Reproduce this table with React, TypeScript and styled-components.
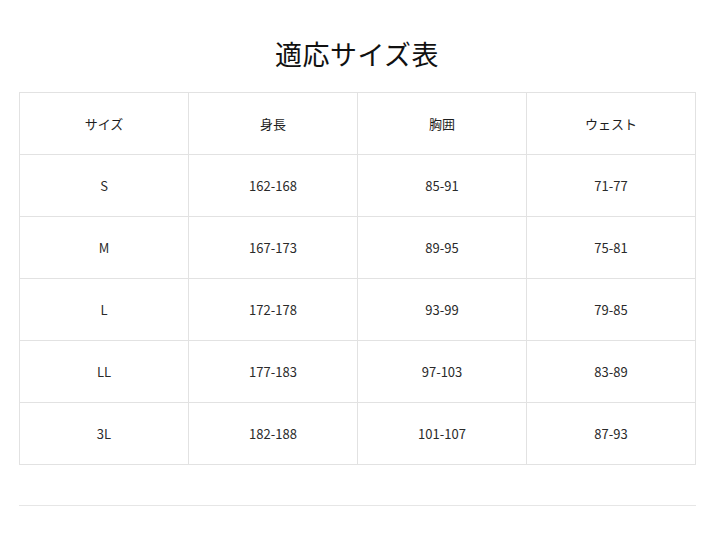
import React from 'react';
import styled, { createGlobalStyle } from 'styled-components';

const GlobalStyle = createGlobalStyle`
  body {
    margin: 0;
    background: #fff;
    font-family: "Noto Sans CJK JP", "Noto Sans", sans-serif;
    color: #222;
  }
`;

const rows = [
  ['S', '162-168', '85-91', '71-77'],
  ['M', '167-173', '89-95', '75-81'],
  ['L', '172-178', '93-99', '79-85'],
  ['LL', '177-183', '97-103', '83-89'],
  ['3L', '182-188', '101-107', '87-93'],
];

const App = () => {
  return (
    <Page>
      <GlobalStyle />
      <Title>適応サイズ表</Title>
      <SizeTable>
        <thead>
          <Tr>
            <Th>サイズ</Th>
            <Th>身長</Th>
            <Th>胸囲</Th>
            <Th>ウェスト</Th>
          </Tr>
        </thead>
        <tbody>
          {rows.map((r) => (
            <Tr key={r[0]}>
              {r.map((c, i) => (
                <Td key={i}>{c}</Td>
              ))}
            </Tr>
          ))}
        </tbody>
      </SizeTable>
      <Divider />
    </Page>
  );
};

const Page = styled.div`
  width: 676px;
  padding: 33px 0 0 19px;
`;

const Title = styled.h1`
  margin: 0 0 17px;
  height: 42px;
  line-height: 42px;
  text-align: center;
  font-size: 27px;
  font-weight: 400;
  color: #111;
  letter-spacing: 0.5px;
`;

const SizeTable = styled.table`
  width: 677px;
  border-collapse: collapse;
  table-layout: fixed;
`;

const Tr = styled.tr`
  height: 62px;
`;

const Th = styled.th`
  border: 1px solid #e2e2e2;
  font-size: 13px;
  font-weight: 400;
  text-align: center;
  vertical-align: middle;
  padding: 0;
  color: #1e1e1e;
`;

const Td = styled.td`
  border: 1px solid #e2e2e2;
  font-size: 13px;
  font-weight: 400;
  text-align: center;
  vertical-align: middle;
  padding: 0;
  color: #2a2a2a;
`;

const Divider = styled.div`
  margin-top: 40px;
  height: 1px;
  width: 677px;
  background: #e6e6e6;
`;

export default App;
